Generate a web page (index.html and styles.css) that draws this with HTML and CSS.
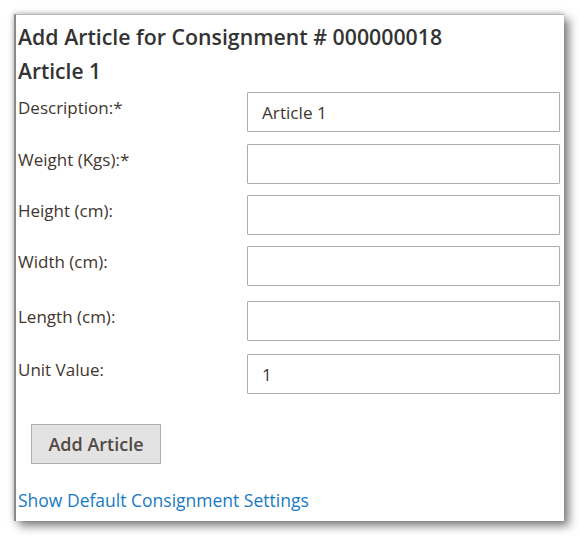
FILE: index.html
```html
<!DOCTYPE html>
<html>
<head>
<meta charset="utf-8">
<link rel="stylesheet" href="styles.css">
</head>
<body>
<div class="card">
  <h2 class="title">Add Article for Consignment # 000000018</h2>
  <h3 class="subtitle">Article 1</h3>
  <div class="form">
    <div class="row"><label class="label">Description:*</label><input class="field" type="text" value="Article 1"></div>
    <div class="row row-gap-xs"><label class="label">Weight (Kgs):*</label><input class="field" type="text" value=""></div>
    <div class="row"><label class="label">Height (cm):</label><input class="field" type="text" value=""></div>
    <div class="row"><label class="label">Width (cm):</label><input class="field" type="text" value=""></div>
    <div class="row row-gap"><label class="label">Length (cm):</label><input class="field" type="text" value=""></div>
    <div class="row row-gap-sm"><label class="label">Unit Value:</label><input class="field" type="text" value="1"></div>
  </div>
  <div class="actions"><button class="btn" type="button">Add Article</button></div>
  <a class="link" href="#">Show Default Consignment Settings</a>
</div>
</body>
</html>
```
FILE: styles.css
```css
html, body {
  margin: 0;
  padding: 0;
  background: #ffffff;
}
body {
  min-height: 536px;
  font-family: "Open Sans", "Liberation Sans", sans-serif;
  color: #41362f;
  overflow: hidden;
}
.card {
  margin: 14px 0 0 14px;
  width: 550px;
  height: 507px;
  box-sizing: border-box;
  background: #fff;
  border-left: 2px solid #8a8a8a;
  border-top: 1px solid #b8b8b8;
  box-shadow: 5px 5px 9px rgba(0,0,0,0.5), -1px -1px 5px rgba(0,0,0,0.2);
  padding: 7px 0 0 2px;
  display: flex;
  flex-direction: column;
}
.title {
  margin: 0;
  font-size: 21.3px;
  font-weight: 600;
  line-height: 30px;
  color: #333;
}
.subtitle {
  margin: 5px 0 0 0;
  font-size: 21px;
  font-weight: 600;
  line-height: 28px;
  color: #333;
}
.form {
  display: flex;
  flex-direction: column;
  gap: 11px;
  margin-top: 7px;
}
.row {
  display: grid;
  grid-template-columns: 229px 313px;
  align-items: start;
}
.row-gap-xs {
  margin-top: 1px;
}
.row-gap {
  margin-top: 4px;
}
.row-gap-sm {
  margin-top: 2px;
}
.label {
  font-size: 17px;
  line-height: 22px;
  padding-top: 5px;
  color: #41362f;
}
.field {
  box-sizing: border-box;
  width: 313px;
  height: 40px;
  margin: 0;
  border: 1px solid #adadad;
  border-radius: 1px;
  padding: 0 0 0 14px;
  font-family: "Open Sans", "Liberation Sans", sans-serif;
  font-size: 17.2px;
  color: #41362f;
  background: #fff;
  outline: none;
}
.actions {
  margin-top: 30px;
  padding-left: 13px;
}
.btn {
  box-sizing: border-box;
  width: 130px;
  height: 40px;
  background: #e3e3e3;
  border: 1px solid #adadad;
  border-radius: 0;
  font-family: "Open Sans", "Liberation Sans", sans-serif;
  font-size: 18px;
  font-weight: 600;
  color: #514943;
  padding: 0;
}
.link {
  margin-top: 24px;
  font-size: 17.5px;
  line-height: 24px;
  color: #1979c3;
  text-decoration: none;
  align-self: flex-start;
}
```
